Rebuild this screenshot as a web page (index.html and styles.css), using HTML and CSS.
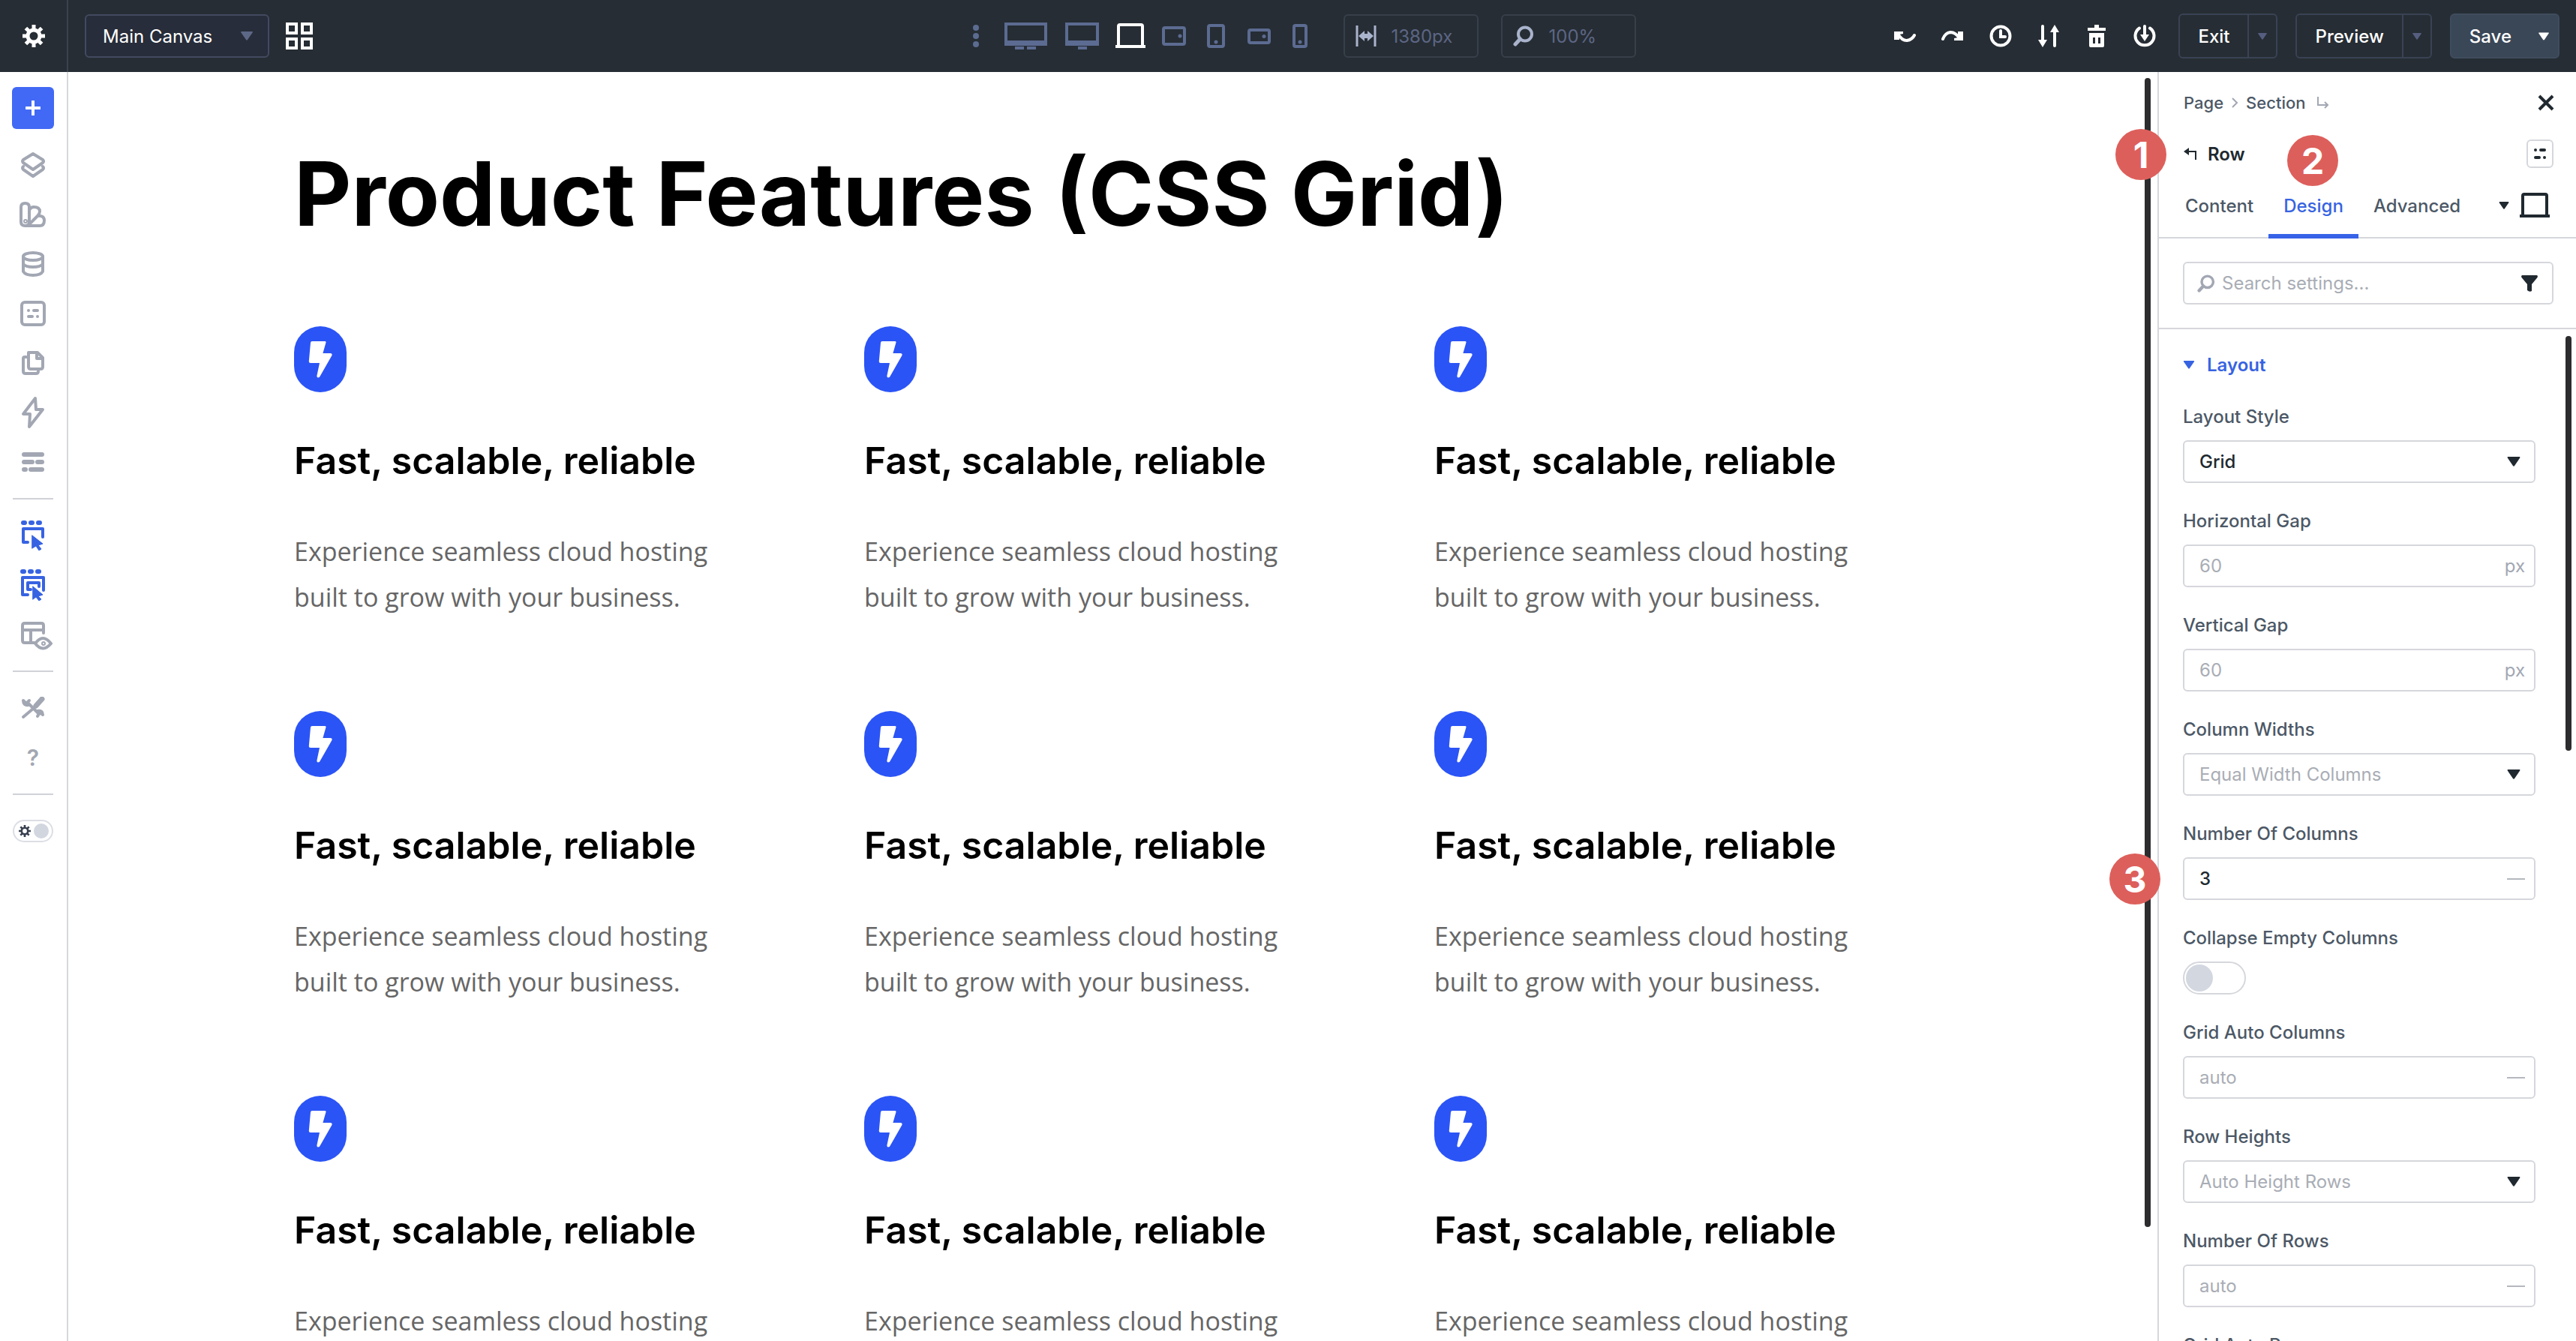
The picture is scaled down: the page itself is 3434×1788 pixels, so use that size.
FILE: index.html
```html
<!DOCTYPE html>
<html lang="en">
<head>
    <meta charset="UTF-8">
    <meta name="viewport" content="width=device-width, initial-scale=1.0">
    <title>Main Canvas - Row Settings</title>
    <link rel="stylesheet" href="styles.css">
</head>
<body>
    <!-- Shared icons -->
    <svg class="sprite" aria-hidden="true">
        <symbol id="bolt" viewBox="0 0 32 50">
            <path d="M5 1h17q2 0 1.400 2l-4 14h10q3 0 2 3L16 47q-1 2.500-3 2.500t-1.500-3L15 30H3q-2.500 0-2.200-2.500L3 3q.2-2 2-2z" fill="currentColor"/>
        </symbol>
        <symbol id="caret" viewBox="0 0 16 12">
            <path d="M1 0h14q1.500 0 .6 1.400L9 11q-1 1.400-2 0L.4 1.400Q-.5 0 1 0z" fill="currentColor"/>
        </symbol>
        <symbol id="laptop" viewBox="0 0 40 34">
            <path d="M4 30V4q0-2 2-2h28q2 0 2 2v26" fill="none" stroke="currentColor" stroke-width="4"/>
            <path d="M0 29h40v4H0z" fill="currentColor"/>
        </symbol>
        <symbol id="search" viewBox="0 0 28 28">
            <circle cx="16" cy="11.500" r="9" fill="none" stroke="currentColor" stroke-width="4"/>
            <path d="M9.500 18L3 25" stroke="currentColor" stroke-width="5" stroke-linecap="round"/>
        </symbol>
        <symbol id="gear" viewBox="0 0 30 30">
            <circle cx="15" cy="15" r="8" fill="none" stroke="currentColor" stroke-width="5"/>
            <path d="M15 0v6M15 24v6M0 15h6M24 15h6M4.400 4.400l4.200 4.200M21.400 21.400l4.200 4.200M4.400 25.600l4.200-4.200M21.400 8.600l4.200-4.200" stroke="currentColor" stroke-width="5"/>
        </symbol>
    </svg>

    <div class="app">
        <header class="topbar">
            <button class="gear-button" aria-label="Settings"><svg width="30" height="30"><use href="#gear"/></svg></button>
            <div class="topbar-content">
                <div class="topbar-left">
                    <div class="canvas-select">
                        <select aria-label="Canvas"><option>Main Canvas</option></select>
                        <svg class="caret" width="16" height="12"><use href="#caret"/></svg>
                    </div>
                    <button class="icon-button" aria-label="Canvas grid">
                        <svg width="36" height="36" viewBox="0 0 36 36" fill="none" stroke="currentColor" stroke-width="4"><path d="M2 2h12v12H2zM22 2h12v12H22zM2 22h12v12H2zM22 22h12v12H22z"/></svg>
                    </button>
                </div>

                <div class="topbar-center">
                    <button class="device dots" aria-label="More">
                        <svg width="8" height="30" viewBox="0 0 8 30" fill="currentColor"><circle cx="4" cy="4" r="4"/><circle cx="4" cy="15" r="4"/><circle cx="4" cy="26" r="4"/></svg>
                    </button>
                    <button class="device wide" aria-label="Ultra wide">
                        <svg width="57" height="36" viewBox="0 0 57 36"><path d="M2 2h53v27H2z" fill="none" stroke="currentColor" stroke-width="4"/><path d="M2 24h53v6H2zM14 32h12v4H14zM30 32h12v4H30z" fill="currentColor"/></svg>
                    </button>
                    <button class="device monitor" aria-label="Desktop">
                        <svg width="45" height="36" viewBox="0 0 45 36"><path d="M2 2h41v27H2z" fill="none" stroke="currentColor" stroke-width="4"/><path d="M2 24h41v6H2zM17 32h12v4H17z" fill="currentColor"/></svg>
                    </button>
                    <button class="device notebook active" aria-label="Laptop"><svg width="40" height="34"><use href="#laptop"/></svg></button>
                    <button class="device tablet-wide" aria-label="Tablet wide">
                        <svg width="32" height="26" viewBox="0 0 32 26"><rect x="2" y="2" width="28" height="22" rx="2" fill="none" stroke="currentColor" stroke-width="4"/><circle cx="24" cy="13" r="2.500" fill="currentColor"/></svg>
                    </button>
                    <button class="device tablet" aria-label="Tablet">
                        <svg width="24" height="32" viewBox="0 0 24 32"><rect x="2" y="2" width="20" height="28" rx="2" fill="none" stroke="currentColor" stroke-width="4"/><circle cx="12" cy="24" r="2.500" fill="currentColor"/></svg>
                    </button>
                    <button class="device phone-wide" aria-label="Phone wide">
                        <svg width="31" height="21" viewBox="0 0 31 21"><rect x="2" y="2" width="27" height="17" rx="2" fill="none" stroke="currentColor" stroke-width="4"/><circle cx="22" cy="10.500" r="2.500" fill="currentColor"/></svg>
                    </button>
                    <button class="device phone" aria-label="Phone">
                        <svg width="20" height="32" viewBox="0 0 20 32"><rect x="2" y="2" width="16" height="28" rx="2" fill="none" stroke="currentColor" stroke-width="4"/><circle cx="10" cy="24" r="2.500" fill="currentColor"/></svg>
                    </button>
                    <label class="top-field">
                        <svg width="28" height="28" viewBox="0 0 28 28"><path d="M2 0v28M26 0v28" stroke="currentColor" stroke-width="3"/><path d="M4 14l8-7v4h4V7l8 7-8 7v-4h-4v4z" fill="currentColor"/></svg>
                        <input type="text" value="1380px" aria-label="Canvas width">
                    </label>
                    <label class="top-field">
                        <svg width="28" height="28"><use href="#search"/></svg>
                        <input type="text" value="100%" aria-label="Zoom">
                    </label>
                </div>

                <div class="topbar-right">
                    <div class="actions">
                        <button class="icon-button" aria-label="Undo">
                            <svg width="30" height="30" viewBox="0 0 30 30"><path d="M6 12q5 9 12 9 7-1 10-7" fill="none" stroke="currentColor" stroke-width="4" stroke-linecap="round"/><path d="M1 9h12v3l-5 1v7H1z" fill="currentColor"/></svg>
                        </button>
                        <button class="icon-button" aria-label="Redo">
                            <svg width="30" height="30" viewBox="0 0 30 30"><path d="M2 19q3-8 10-9 7 0 12 8" fill="none" stroke="currentColor" stroke-width="4" stroke-linecap="round"/><path d="M29 9v12H17v-3l5-1V9z" fill="currentColor"/></svg>
                        </button>
                        <button class="icon-button" aria-label="History">
                            <svg width="30" height="30" viewBox="0 0 30 30" fill="none" stroke="currentColor" stroke-width="4"><circle cx="15" cy="15" r="12.500"/><path d="M15 8v8h6" stroke-linecap="round"/></svg>
                        </button>
                        <button class="icon-button" aria-label="Portability">
                            <svg width="30" height="30" viewBox="0 0 30 30"><path d="M7 2v22M23 28V7" stroke="currentColor" stroke-width="4" stroke-linecap="round"/><path d="M1 20h12l-6 10zM17 10h12L23 0z" fill="currentColor"/></svg>
                        </button>
                        <button class="icon-button" aria-label="Clear layout">
                            <svg width="30" height="30" viewBox="0 0 30 30" fill="currentColor"><path d="M12 0h6v4h9v4H3V4h9z"/><path fill-rule="evenodd" d="M5 11h20v17q0 2-2 2H7q-2 0-2-2zM10 17v8h3v-8zM17 17v8h3v-8z"/></svg>
                        </button>
                        <button class="icon-button" aria-label="Exit options">
                            <svg width="30" height="30" viewBox="0 0 30 30"><path d="M8 4.500a12.500 12.500 0 1 0 14 0M15 2v14" fill="none" stroke="currentColor" stroke-width="4" stroke-linecap="round"/><path d="M9 13h12l-6 9z" fill="currentColor"/></svg>
                        </button>
                    </div>
                    <div class="split-button">
                        <button class="split-main">Exit</button>
                        <button class="split-toggle" aria-label="Exit menu"><svg width="12" height="9" viewBox="0 0 16 12"><use href="#caret"/></svg></button>
                    </div>
                    <div class="split-button">
                        <button class="split-main">Preview</button>
                        <button class="split-toggle" aria-label="Preview menu"><svg width="12" height="9" viewBox="0 0 16 12"><use href="#caret"/></svg></button>
                    </div>
                    <div class="split-button save">
                        <button class="split-main">Save</button>
                        <button class="split-toggle" aria-label="Save menu"><svg width="14" height="11" viewBox="0 0 16 12"><use href="#caret"/></svg></button>
                    </div>
                </div>
            </div>
        </header>

        <div class="workspace">
            <nav class="sidebar" aria-label="Builder tools">
                <button class="tool add" aria-label="Add">
                    <svg width="20" height="20" viewBox="0 0 20 20"><path d="M10 1v18M1 10h18" stroke="currentColor" stroke-width="4" stroke-linecap="round"/></svg>
                </button>
                <button class="tool" aria-label="Layers">
                    <svg width="34" height="36" viewBox="0 0 34 36"><path d="M17 3l13 8q2 2 0 4l-13 9-13-9q-2-2 0-4zM4 20q-2 2 0 4l13 9 13-9q2-2 0-4"/></svg>
                </button>
                <button class="tool" aria-label="Variables">
                    <svg width="36" height="36" viewBox="0 0 36 36"><path d="M2 8q0-5 5.500-5T13 8v20q0 5-5.500 5T2 28zM13 12q2-4 6-4 8 0 8 6 0 3-3 6L12 32M24 20q9-1 9 6 0 7-6 7H8"/><circle cx="8" cy="27" r="1"/></svg>
                </button>
                <button class="tool" aria-label="Data">
                    <svg width="32" height="34" viewBox="0 0 32 34"><ellipse cx="16" cy="7" rx="13" ry="5"/><path d="M3 7v20q3 5 13 5t13-5V7M3 17q3 4 13 4t13-4"/></svg>
                </button>
                <button class="tool" aria-label="Presets">
                    <svg width="34" height="34" viewBox="0 0 34 34"><rect x="2" y="2" width="30" height="30" rx="4"/><path d="M11 13h0M18 13h5M11 21h5M23 21h0"/></svg>
                </button>
                <button class="tool" aria-label="Pages">
                    <svg width="32" height="34" viewBox="0 0 32 34"><path d="M10 3h12l7 7v12q0 3-3 3H13q-3 0-3-3zM21 3v8h8M7 9H5q-2 0-2 2v17q0 3 3 3h14q3 0 3-3"/></svg>
                </button>
                <button class="tool" aria-label="Interactions">
                    <svg width="32" height="44" viewBox="0 0 32 44"><path d="M19 3L3 24h9l-1 17 18-23h-9z"/></svg>
                </button>
                <button class="tool" aria-label="Sections">
                    <svg width="30" height="28" viewBox="0 0 30 28"><path d="M3 4h24M3 14h11M21 14h6M3 24h2M12 24h15" stroke-width="6"/></svg>
                </button>
                <hr>
                <button class="tool blue" aria-label="Select">
                    <svg width="32" height="40" viewBox="0 0 32 40"><path d="M3 3h2M13 3h2M23 3h2" stroke-width="6"/><path d="M9 29H3V11h26v11"/><path d="M15 20l14 11-6 2 4 5-3 2-4-6-5 3z" fill="currentColor" stroke-width="1"/></svg>
                </button>
                <button class="tool blue" aria-label="Select nested">
                    <svg width="34" height="42" viewBox="0 0 34 42"><path d="M3 3h2M13 3h2M23 3h2" stroke-width="6"/><path d="M10 34H3V11h28v17M14 27h-4v-9h15v5"/><path d="M17 23l13 11-6 2 4 4-3 2-4-5-4 3z" fill="currentColor" stroke-width="1"/></svg>
                </button>
                <button class="tool eye" aria-label="View mode">
                    <svg width="42" height="40" viewBox="0 0 42 40"><path d="M18 29H5q-3 0-3-3V6q0-3 3-3h22q3 0 3 3v10M2 12h28M13 12v17"/><path d="M19 30q10-14 21 0-11 13-21 0z"/><circle cx="30" cy="30" r="1"/></svg>
                </button>
                <hr>
                <button class="tool" aria-label="Tools">
                    <svg width="32" height="30" viewBox="0 0 32 30"><path d="M3 27l13-11L28 4" stroke-width="4"/><path d="M20 12l8-9" stroke-width="7"/><path d="M10 9l14 14" stroke-width="4"/><path d="M3 5l4 4 4-4M3 5q0 7 7 6M29 24l-4-3-3 5M29 24q0-6-7-5"/></svg>
                </button>
                <button class="tool help" aria-label="Help">?</button>
                <hr>
                <label class="theme-switch">
                    <input type="checkbox" aria-label="Dark mode">
                    <svg width="16" height="16" viewBox="0 0 30 30"><use href="#gear"/></svg>
                    <span class="knob"></span>
                </label>
            </nav>

            <main class="canvas">
                <section class="content">
                    <h1>Product Features (CSS Grid)</h1>
                    <div class="features">
                        <article class="feature">
                            <span class="feature-icon"><svg width="32" height="50"><use href="#bolt"/></svg></span>
                            <h2>Fast, scalable, reliable</h2>
                            <p>Experience seamless cloud hosting built to grow with your business.</p>
                        </article>
                        <article class="feature">
                            <span class="feature-icon"><svg width="32" height="50"><use href="#bolt"/></svg></span>
                            <h2>Fast, scalable, reliable</h2>
                            <p>Experience seamless cloud hosting built to grow with your business.</p>
                        </article>
                        <article class="feature">
                            <span class="feature-icon"><svg width="32" height="50"><use href="#bolt"/></svg></span>
                            <h2>Fast, scalable, reliable</h2>
                            <p>Experience seamless cloud hosting built to grow with your business.</p>
                        </article>
                        <article class="feature">
                            <span class="feature-icon"><svg width="32" height="50"><use href="#bolt"/></svg></span>
                            <h2>Fast, scalable, reliable</h2>
                            <p>Experience seamless cloud hosting built to grow with your business.</p>
                        </article>
                        <article class="feature">
                            <span class="feature-icon"><svg width="32" height="50"><use href="#bolt"/></svg></span>
                            <h2>Fast, scalable, reliable</h2>
                            <p>Experience seamless cloud hosting built to grow with your business.</p>
                        </article>
                        <article class="feature">
                            <span class="feature-icon"><svg width="32" height="50"><use href="#bolt"/></svg></span>
                            <h2>Fast, scalable, reliable</h2>
                            <p>Experience seamless cloud hosting built to grow with your business.</p>
                        </article>
                        <article class="feature">
                            <span class="feature-icon"><svg width="32" height="50"><use href="#bolt"/></svg></span>
                            <h2>Fast, scalable, reliable</h2>
                            <p>Experience seamless cloud hosting built to grow with your business.</p>
                        </article>
                        <article class="feature">
                            <span class="feature-icon"><svg width="32" height="50"><use href="#bolt"/></svg></span>
                            <h2>Fast, scalable, reliable</h2>
                            <p>Experience seamless cloud hosting built to grow with your business.</p>
                        </article>
                        <article class="feature">
                            <span class="feature-icon"><svg width="32" height="50"><use href="#bolt"/></svg></span>
                            <h2>Fast, scalable, reliable</h2>
                            <p>Experience seamless cloud hosting built to grow with your business.</p>
                        </article>
                    </div>
                </section>
                <div class="scrollbar canvas-scrollbar"></div>
            </main>

            <aside class="panel">
                <div class="breadcrumb">
                    <a href="#">Page</a>
                    <svg width="10" height="16" viewBox="0 0 10 16" fill="none" stroke="currentColor" stroke-width="2"><path d="M2 2l6 6-6 6"/></svg>
                    <a href="#">Section</a>
                    <svg class="crumb-end" width="16" height="18" viewBox="0 0 16 18" fill="none" stroke="currentColor" stroke-width="2"><path d="M1 1v11h13M10 8l4 4-4 4"/></svg>
                    <button class="close" aria-label="Close">
                        <svg width="22" height="22" viewBox="0 0 22 22"><path d="M2 2l18 18M20 2L2 20" stroke="currentColor" stroke-width="4"/></svg>
                    </button>
                </div>

                <div class="panel-title">
                    <svg width="18" height="18" viewBox="0 0 18 18"><path d="M2 6h14v11" fill="none" stroke="currentColor" stroke-width="2"/><path d="M0 6l7-5v10z" fill="currentColor"/></svg>
                    <strong>Row</strong>
                    <button class="preset" aria-label="Presets">
                        <svg width="18" height="16" viewBox="0 0 18 16" stroke="currentColor" stroke-width="4" stroke-linecap="round"><path d="M3 3h0M10 3h5M3 13h5M15 13h0"/></svg>
                    </button>
                    <span class="badge badge-row">1</span>
                    <span class="badge badge-design">2</span>
                </div>

                <div class="tabs">
                    <button class="tab">Content</button>
                    <button class="tab active">Design</button>
                    <button class="tab">Advanced</button>
                    <button class="device-menu" aria-label="Device">
                        <svg width="14" height="10" viewBox="0 0 16 12"><use href="#caret"/></svg>
                        <svg width="40" height="34"><use href="#laptop"/></svg>
                    </button>
                </div>

                <div class="search-area">
                    <div class="field search">
                        <svg width="24" height="24" viewBox="0 0 28 28"><use href="#search"/></svg>
                        <input type="text" placeholder="Search settings..." aria-label="Search settings">
                        <button class="filter" aria-label="Filter">
                            <svg width="22" height="22" viewBox="0 0 22 22"><path d="M1 0h20q1.500 1 .5 3L14 12v9q-3 2-6-1v-8L.5 3Q-.5 1 1 0z" fill="currentColor"/></svg>
                        </button>
                    </div>
                </div>

                <div class="settings">
                    <button class="group-title"><svg width="16" height="11" viewBox="0 0 16 12"><use href="#caret"/></svg>Layout</button>

                    <div class="setting">
                        <label for="layoutStyle">Layout Style</label>
                        <div class="field">
                            <select id="layoutStyle"><option>Grid</option></select>
                            <svg class="caret" width="18" height="13" viewBox="0 0 16 12"><use href="#caret"/></svg>
                        </div>
                    </div>
                    <div class="setting">
                        <label for="horizontalGap">Horizontal Gap</label>
                        <div class="field"><input type="text" id="horizontalGap" placeholder="60"><span class="unit">px</span></div>
                    </div>
                    <div class="setting">
                        <label for="verticalGap">Vertical Gap</label>
                        <div class="field"><input type="text" id="verticalGap" placeholder="60"><span class="unit">px</span></div>
                    </div>
                    <div class="setting">
                        <label for="columnWidths">Column Widths</label>
                        <div class="field">
                            <select id="columnWidths" class="default"><option>Equal Width Columns</option></select>
                            <svg class="caret" width="18" height="13" viewBox="0 0 16 12"><use href="#caret"/></svg>
                        </div>
                    </div>
                    <div class="setting">
                        <label for="columnCount">Number Of Columns</label>
                        <div class="field"><input type="text" id="columnCount" value="3"><span class="dash"></span></div>
                        <span class="badge badge-columns">3</span>
                    </div>
                    <div class="setting">
                        <label for="collapseColumns">Collapse Empty Columns</label>
                        <input type="checkbox" class="switch" id="collapseColumns">
                    </div>
                    <div class="setting">
                        <label for="autoColumns">Grid Auto Columns</label>
                        <div class="field"><input type="text" id="autoColumns" placeholder="auto"><span class="dash"></span></div>
                    </div>
                    <div class="setting">
                        <label for="rowHeights">Row Heights</label>
                        <div class="field">
                            <select id="rowHeights" class="default"><option>Auto Height Rows</option></select>
                            <svg class="caret" width="18" height="13" viewBox="0 0 16 12"><use href="#caret"/></svg>
                        </div>
                    </div>
                    <div class="setting">
                        <label for="rowCount">Number Of Rows</label>
                        <div class="field"><input type="text" id="rowCount" placeholder="auto"><span class="dash"></span></div>
                    </div>
                    <div class="setting">
                        <label for="autoRows">Grid Auto Rows</label>
                        <div class="field"><input type="text" id="autoRows" placeholder="auto"><span class="dash"></span></div>
                    </div>
                    <div class="scrollbar panel-scrollbar"></div>
                </div>
            </aside>
        </div>
    </div>
</body>
</html>
```
FILE: styles.css
```css
* {
    box-sizing: border-box;
}
body {
    margin: 0;
    font-family: Inter, "Liberation Sans", sans-serif;
    font-size: 24px;
    color: #20292f;
    background: #fff;
}
button, input, select {
    font: inherit;
    color: inherit;
    margin: 0;
    padding: 0;
    border: none;
    background: none;
}
select {
    appearance: none;
}
button {
    display: flex;
    align-items: center;
    justify-content: center;
    cursor: pointer;
}
svg {
    display: block;
    flex-shrink: 0;
}
.sprite {
    position: absolute;
    width: 0;
    height: 0;
}
.app {
    display: flex;
    flex-direction: column;
    height: 100vh;
    overflow: hidden;
}

/* Top bar */
.topbar {
    display: flex;
    height: 96px;
    flex-shrink: 0;
    background: #262d34;
    color: #fff;
}
.gear-button {
    width: 91px;
    border-right: 2px solid #3a4150;
}
.topbar-content {
    flex: 1;
    display: grid;
    grid-template-columns: 1fr auto 1fr;
    align-items: center;
    padding: 0 22px;
}
.topbar-left, .topbar-center, .topbar-right, .actions {
    display: flex;
    align-items: center;
}
.topbar-left {
    gap: 22px;
}
.canvas-select {
    display: flex;
    align-items: center;
    position: relative;
    width: 246px;
    height: 58px;
    border: 2px solid #434a60;
    border-radius: 6px;
    background: #272d3a;
}
.canvas-select select {
    width: 100%;
    height: 100%;
    padding-left: 22px;
}
.caret {
    position: absolute;
    right: 18px;
    pointer-events: none;
}
.canvas-select .caret {
    right: 20px;
    color: #5d6887;
}
.topbar-center {
    gap: 20px;
    padding-right: 58px;
    color: #5c6b91;
}
.device {
    height: 44px;
}
.device.active {
    color: #fff;
}
.dots {
    width: 28px;
}
.wide {
    width: 65px;
}
.notebook {
    width: 44px;
}
.tablet {
    width: 40px;
}
.phone-wide {
    width: 36px;
}
.phone {
    width: 32px;
}
.top-field {
    display: flex;
    align-items: center;
    gap: 20px;
    width: 180px;
    height: 58px;
    margin-left: 10px;
    padding: 0 14px;
    border: 2px solid #373f4a;
    border-radius: 6px;
    color: #a9b3cc;
}
.phone + .top-field {
    margin-left: 22px;
}
.top-field input {
    width: 100%;
    min-width: 0;
    color: #5c6685;
}
.topbar-right {
    justify-content: flex-end;
    gap: 24px;
}
.actions {
    gap: 34px;
    margin-right: 6px;
}
.split-button {
    display: flex;
    height: 60px;
    border: 2px solid #3a4354;
    border-radius: 6px;
    font-weight: 500;
}
.split-main {
    padding: 0 24px;
}
.split-toggle {
    width: 38px;
    border-left: 2px solid #3a4354;
    color: #565e80;
}
.save {
    background: #3a4757;
    border-color: #3f4c5e;
}
.save .split-toggle {
    border-left: none;
    color: #fff;
}

/* Left tools */
.workspace {
    flex: 1;
    display: flex;
    min-height: 0;
}
.sidebar {
    display: flex;
    flex-direction: column;
    align-items: center;
    width: 91px;
    padding: 20px 1px 0 0;
    border-right: 2px solid #d5d7dc;
}
.tool {
    width: 56px;
    height: 56px;
    margin-bottom: 10px;
    flex-shrink: 0;
    color: #a2a7b3;
}
.tool svg {
    fill: none;
    stroke: currentColor;
    stroke-width: 4;
    stroke-linecap: round;
    stroke-linejoin: round;
}
.add {
    margin-bottom: 20px;
    border-radius: 6px;
    background: #4169f5;
    color: #fff;
}
.blue {
    color: #3763e2;
}
.eye {
    padding: 4px 0 0 10px;
}
.help {
    font-size: 30px;
    font-weight: 600;
}
.sidebar hr {
    width: 54px;
    height: 2px;
    margin: 10px 0 20px;
    border: none;
    flex-shrink: 0;
    background: #d0d2d8;
}
.theme-switch {
    display: flex;
    align-items: center;
    justify-content: space-between;
    width: 54px;
    height: 30px;
    margin-top: 13px;
    padding: 0 4px 0 6px;
    border: 2px solid #dcdee5;
    border-radius: 15px;
    color: #3a4150;
}
.theme-switch input {
    position: absolute;
    opacity: 0;
}
.knob {
    width: 20px;
    height: 20px;
    border-radius: 50%;
    background: #d2d6df;
}

/* Canvas */
.canvas {
    flex: 1;
    position: relative;
    min-width: 0;
    padding: 106px 23px 0 0;
    overflow: hidden;
}
.content {
    max-width: 2160px;
    margin: 0 auto;
}
h1 {
    margin: 0 0 121px;
    font-size: 118px;
    font-weight: 700;
    line-height: 112px;
    color: #000;
}
.features {
    display: grid;
    grid-template-columns: repeat(3, 1fr);
    gap: 121px 120px;
}
.feature {
    display: flex;
    flex-direction: column;
    gap: 67px;
}
.feature-icon {
    display: flex;
    align-items: center;
    justify-content: center;
    width: 70px;
    height: 88px;
    border-radius: 35px;
    background: #2b54f6;
    color: #fff;
}
h2 {
    margin: 0;
    font-size: 50px;
    font-weight: 600;
    line-height: 48px;
    color: #000;
}
.feature p {
    margin: 0;
    padding-right: 40px;
    font-family: "Open Sans", sans-serif;
    font-size: 34px;
    line-height: 61px;
    color: #666;
}
.scrollbar {
    position: absolute;
    width: 8px;
    border-radius: 4px;
    background: #2c2c2e;
}
.canvas-scrollbar {
    top: 8px;
    right: 9px;
    bottom: 9%;
}

/* Settings panel */
.panel {
    display: flex;
    flex-direction: column;
    width: 558px;
    flex-shrink: 0;
    border-left: 2px solid #d5d7dc;
    color: #4c5866;
}
.breadcrumb {
    display: flex;
    align-items: center;
    gap: 10px;
    height: 82px;
    padding: 0 29px 0 33px;
    font-size: 22px;
    font-weight: 500;
}
.breadcrumb a {
    color: inherit;
    text-decoration: none;
}
.breadcrumb svg {
    color: #a2a7b3;
}
.breadcrumb .crumb-end {
    margin-left: 6px;
}
.breadcrumb .close {
    margin-left: auto;
}
.breadcrumb .close svg {
    color: #20292f;
}
.panel-title {
    display: flex;
    align-items: center;
    gap: 14px;
    position: relative;
    height: 54px;
    padding: 0 30px 0 33px;
    color: #20292f;
}
.panel-title strong {
    font-weight: 600;
}
.preset {
    width: 36px;
    height: 38px;
    margin-left: auto;
    border: 2px solid #d5d7dc;
    border-radius: 6px;
}
.badge {
    display: flex;
    align-items: center;
    justify-content: center;
    position: absolute;
    z-index: 1;
    width: 68px;
    height: 68px;
    border-radius: 50%;
    background: #dd5f5b;
    color: #fff;
    font-size: 48px;
    font-weight: 700;
}
.badge-row {
    left: -58px;
    top: -6px;
}
.badge-design {
    left: 171px;
    top: 2px;
}
.badge-columns {
    left: -98px;
    bottom: -6px;
}
.tabs {
    display: flex;
    height: 86px;
    padding: 0 35px 0 15px;
    border-bottom: 2px solid #d5d7dc;
    font-weight: 500;
}
.tab {
    padding: 4px 20px 0;
    margin-bottom: -2px;
    border-bottom: 6px solid transparent;
}
.tab.active {
    border-color: #3763e8;
    color: #3763e2;
}
.device-menu {
    gap: 14px;
    margin-left: auto;
    color: #20292f;
}
.search-area {
    padding: 31px 30px 31px 32px;
    border-bottom: 2px solid #d5d7dc;
}
.field {
    display: flex;
    align-items: center;
    position: relative;
    height: 57px;
    padding-right: 12px;
    border: 2px solid #d5d7dc;
    border-radius: 6px;
}
.field input, .field select {
    flex: 1;
    min-width: 0;
    height: 100%;
    padding-left: 20px;
    color: #20292f;
    font-weight: 500;
}
.field input::placeholder {
    color: #a9adb5;
    font-weight: 400;
    opacity: 1;
}
.field select.default {
    color: #a9adb5;
    font-weight: 400;
}
.search {
    padding: 0 19px 0 17px;
    color: #a2a7b3;
}
.search input {
    padding-left: 9px;
}
.filter {
    color: #20292f;
}
.settings {
    flex: 1;
    display: flex;
    flex-direction: column;
    gap: 36px;
    position: relative;
    min-height: 0;
    padding: 32px 54px 0 32px;
}
.group-title {
    align-self: flex-start;
    flex-shrink: 0;
    gap: 16px;
    height: 30px;
    margin-bottom: 4px;
    font-weight: 600;
    color: #3763e2;
}
.setting {
    flex-shrink: 0;
    position: relative;
    font-weight: 500;
}
.setting label {
    display: block;
    margin-bottom: 16px;
    line-height: 30px;
}
.field .caret {
    color: #20292f;
}
.unit {
    color: #a2a7b3;
    font-weight: 400;
}
.dash {
    width: 24px;
    height: 2px;
    background: #b4b7be;
}
.switch {
    display: block;
    appearance: none;
    width: 84px;
    height: 44px;
    padding: 2px;
    border: 2px solid #d5d7dc;
    border-radius: 22px;
}
.switch::before {
    content: "";
    display: block;
    width: 36px;
    height: 36px;
    border-radius: 50%;
    background: #d2d7e0;
}
.panel-scrollbar {
    top: 9px;
    right: 6px;
    height: 41%;
}
```
